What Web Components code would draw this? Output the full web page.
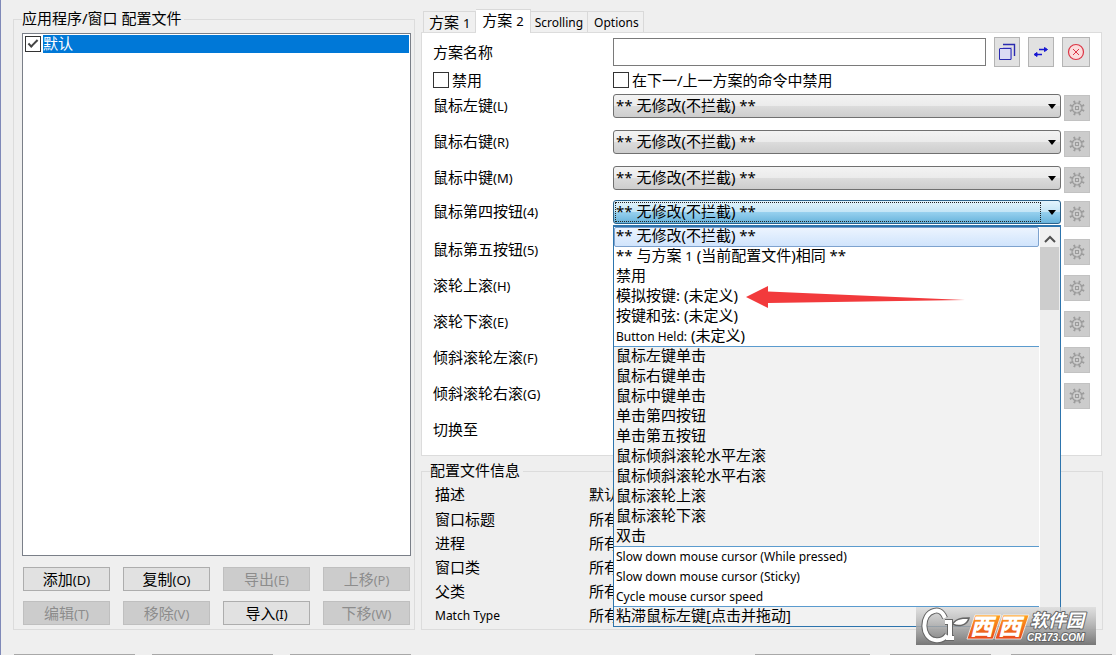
<!DOCTYPE html>
<html lang="zh-CN">
<head>
<meta charset="utf-8">
<title>配置文件</title>
<style>
  html { height: 100%; }
  body {
    margin: 0; height: 100%; box-sizing: border-box; overflow: hidden; position: relative;
    background: #efefef; border-left: 1px solid #7f89b8; color: #000;
    font: 15px/20px "Noto Sans", "Noto Sans CJK SC", sans-serif;
  }
</style>
</head>
<body>
<settings-page>
  <group-box slot="left" caption="应用程序/窗口 配置文件">
    <profile-list></profile-list>
  </group-box>
  <tab-panel slot="right">
    <name-row></name-row>
    <action-list></action-list>
  </tab-panel>
  <group-box slot="right" caption="配置文件信息">
    <profile-info></profile-info>
  </group-box>
</settings-page>
<site-mark></site-mark>

<script>
(function () {
  const BASE = `
    *, *::before, *::after { box-sizing: border-box; }
    button, input, select { font: inherit; color: inherit; margin: 0; padding: 0; }
    small { font-size: 13px; }
    .en { font-size: 12px; }
    input[type=checkbox] {
      appearance: none; flex: none; width: 16px; height: 16px; background: #fff; border: 1px solid #333;
    }
    input[type=checkbox]:checked::after {
      content: ""; display: block; width: 10px; height: 5px; margin: 3px 2px;
      border: solid #444; border-width: 0 0 2px 2px; transform: rotate(-45deg);
    }
  `;

  class BaseElement extends HTMLElement {
    constructor() {
      super();
      this.attachShadow({ mode: 'open' });
    }

    connectedCallback() {
      this.shadowRoot.innerHTML = `<style>${BASE}</style>${this.view()}`;
    }
  }

  class SettingsPage extends BaseElement {
    view() {
      return `
        <style>
          :host { display: block; padding: 9px 0 0 12px; }
          main {
            display: grid; grid-template-columns: minmax(0, 402fr) minmax(0, 682fr);
            gap: 6px; padding-right: 13px;
          }
          .col { display: flex; flex-direction: column; gap: 5px; }
          .left ::slotted(*) { flex: 1; }
          footer { display: flex; justify-content: space-between; margin-top: 24px; padding: 0 4px 0 1px; }
          footer div { display: flex; gap: 17px; }
          footer .end { gap: 20px; }
          footer button { width: 121px; height: 24px; background: #e1e1e1; border: 1px solid #a8a8a8; }
          footer .end button { width: 101px; }
          footer .end button:first-child { width: 115px; }
        </style>
        <main>
          <div class="col left"><slot name="left"></slot></div>
          <div class="col"><slot name="right"></slot></div>
        </main>
        <footer>
          <div><button></button><button></button><button></button></div>
          <div class="end"><button></button><button></button><button></button></div>
        </footer>
      `;
    }
  }

  class GroupBox extends BaseElement {
    view() {
      return `
        <style>
          :host { display: flex; }
          fieldset {
            display: flex; flex-direction: column;
            flex: 1; min-width: 0; margin: 0; padding: 0 3px 0 8px; border: 1px solid #dcdcdc;
          }
          legend { padding: 0 3px 0 0; height: 20px; line-height: 18px; }
          ::slotted(*) { flex: 1; }
        </style>
        <fieldset>
          <legend>${this.getAttribute('caption')}</legend>
          <slot></slot>
        </fieldset>
      `;
    }
  }

  class ProfileList extends BaseElement {
    view() {
      const buttons = [
        ['添加', 'D', 1], ['复制', 'O', 1], ['导出', 'E', 0], ['上移', 'P', 0],
        ['编辑', 'T', 0], ['移除', 'V', 0], ['导入', 'I', 1], ['下移', 'W', 0]
      ];
      return `
        <style>
          :host { display: flex; flex-direction: column; padding: 4px 0; }
          .list { flex: 1; background: #fff; border: 1px solid #7a7f88; padding: 1px; }
          label { display: flex; align-items: center; gap: 2px; padding-left: 1px; }
          label span { flex: 1; height: 18px; line-height: 16px; background: #0078d7; color: #fff; }
          .buttons {
            display: grid; grid-template-columns: repeat(4, 1fr); gap: 10px 13px; margin: 11px 1px 0;
          }
          button { height: 24px; line-height: 20px; background: #e1e1e1; border: 1px solid #adadad; }
          button:disabled { background: #ccc; border-color: #bfbfbf; color: #8c8c8c; }
        </style>
        <div class="list">
          <label><input type="checkbox" checked><span>默认</span></label>
        </div>
        <div class="buttons">
          ${buttons.map(([text, key, on]) => `
            <button ${on ? '' : 'disabled'}>${text}<small>(${key})</small></button>
          `).join('')}
        </div>
      `;
    }
  }

  class TabPanel extends BaseElement {
    view() {
      return `
        <style>
          :host { display: block; padding-right: 1px; }
          nav { display: flex; align-items: flex-end; height: 23px; padding-left: 2px; }
          button {
            height: 21px; line-height: 20px; padding: 0 5px; background: #f0f0f0;
            border: 1px solid #d9d9d9; border-width: 1px 1px 0 0;
          }
          button:first-child { border-left-width: 1px; }
          button[aria-selected=true] {
            height: 24px; margin-bottom: -1px; padding: 0 6px 2px; background: #fff; border-bottom: 0;
          }
          button.en { padding: 1px 4px 0; }
          button.en:last-child { padding: 1px 4px 0 6px; }
          .body { background: #fff; border: 1px solid #dcdcdc; padding: 4px 11px 18px; height: 424px; }
        </style>
        <nav role="tablist">
          <button role="tab">方案 <small>1</small></button>
          <button role="tab" aria-selected="true">方案 <small>2</small></button>
          <button role="tab" class="en">Scrolling</button>
          <button role="tab" class="en">Options</button>
        </nav>
        <div class="body"><slot></slot></div>
      `;
    }
  }

  class NameRow extends BaseElement {
    view() {
      return `
        <style>
          :host { display: block; }
          .row {
            display: grid; grid-template-columns: 180px 1fr; align-items: center;
            height: 27px; padding-bottom: 2px;
          }
          .name { height: 30px; padding: 0; }
          .tools { display: flex; align-items: center; gap: 8px; }
          .tools input { flex: 1; min-width: 0; height: 28px; padding: 0 4px; background: #fff; border: 1px solid #7a7a7a; }
          button { width: 26px; height: 30px; background: #e1e1e1; border: 1px solid #b4b4b4; display: grid; place-items: center; }
          button:last-child { width: 28px; }
          .check { display: flex; align-items: center; gap: 3px; }
          svg { display: block; }
        </style>
        <div class="row name">
          <label for="name">方案名称</label>
          <div class="tools">
            <input id="name" type="text">
            <button aria-label="复制">
              <svg width="18" height="18" fill="none" stroke="#2b2bb0">
                <path d="M5 1.5H16.5V13" stroke-width="1.4"/><path d="M13.5 4V16M5 4.5H13" stroke="#b9b4ee"/>
                <path d="M2 5.5H13V16.5H1.500V5.500" fill="#dcdcf4"/>
              </svg>
            </button>
            <button aria-label="交换">
              <svg width="18" height="18" fill="#1717d2" stroke="#1717d2" stroke-width="1.600">
                <path d="M7 6.500H13M5 11.500H10"/>
                <path d="M12.500 4.500L15.500 6.500L12.500 8.500ZM5 9.500L2 11.500L5 13.500Z" stroke-width="1"/>
              </svg>
            </button>
            <button aria-label="删除">
              <svg width="18" height="18" fill="none" stroke="#dc3545">
                <circle cx="9" cy="9" r="7.500" fill="#fbdcdc" stroke-width="1.200"/>
                <path d="M6 6L12 12M12 6L6 12"/>
              </svg>
            </button>
          </div>
        </div>
        <div class="row">
          <label class="check"><input type="checkbox">禁用</label>
          <label class="check"><input type="checkbox">在下一/上一方案的命令中禁用</label>
        </div>
      `;
    }
  }

  class ActionList extends BaseElement {
    view() {
      const rows = [
        ['鼠标左键', 'L'], ['鼠标右键', 'R'], ['鼠标中键', 'M'], ['鼠标第四按钮', '4'], ['鼠标第五按钮', '5'],
        ['滚轮上滚', 'H'], ['滚轮下滚', 'E'], ['倾斜滚轮左滚', 'F'], ['倾斜滚轮右滚', 'G']
      ];
      return `
        <style>
          :host { display: grid; grid-template-rows: 36px 36px 34px 38px repeat(6, 36px); }
          .switch { line-height: 22px; }
        </style>
        ${rows.map(([text, key]) => `
          <action-row hotkey="${key}" ${key === '4' ? 'open' : ''}>${text}</action-row>
        `).join('')}
        <div class="switch">切换至</div>
      `;
    }
  }

  class ActionRow extends BaseElement {
    view() {
      const open = this.hasAttribute('open');
      const teeth = [22, 67, 112, 157, 202, 247, 292, 337]
        .map(a => `<path d="M8 4V1M7 1H9" transform="rotate(${a} 8 8)"/>`).join('');
      return `
        <style>
          :host { display: grid; grid-template-columns: 180px 1fr 26px; align-items: start; }
          label { height: 24px; line-height: 22px; }
          .combo { position: relative; display: grid; margin-right: 3px; }
          select {
            appearance: none; width: 100%; height: 24px; padding: 0 20px 3px 2px; line-height: 18px;
            border: 1px solid #707070; border-radius: 3px;
            background: linear-gradient(#f3f3f3, #ebebeb 49%, #dcdcdc 50%, #cdcdcd);
          }
          .combo::after {
            content: ""; position: absolute; right: 5px; top: 10px; pointer-events: none;
            border: 4px solid transparent; border-top: 5px solid #000; border-bottom: 0;
          }
          :host([open]) select {
            border-color: #2c628b;
            background: linear-gradient(#e3f4fc, #c4e5f6 49%, #98d1ef 50%, #68b3db);
          }
          .focus { position: absolute; inset: 2px 20px 2px 2px; border: 1px dotted #222; pointer-events: none; }
          action-menu { position: absolute; top: 25px; left: 0; right: 0; z-index: 2; }
          button {
            display: grid; place-items: center; width: 26px; height: 26px; margin-top: 1px;
            background: #ccc; border: 1px solid #c2c2c2;
          }
          svg { display: block; overflow: visible; }
        </style>
        <label for="action"><slot></slot><small>(${this.getAttribute('hotkey')})</small></label>
        <div class="combo">
          <select id="action"><option>** 无修改(不拦截) **</option></select>
          ${open ? '<div class="focus"></div><action-menu></action-menu>' : ''}
        </div>
        <button disabled aria-label="设置">
          <svg width="16" height="16" fill="none" stroke="#9c9c9c" stroke-width="1.500">
            ${teeth}
            <circle cx="8" cy="8" r="5" stroke-width="1.200"/>
            <rect x="6.500" y="6.500" width="3" height="3" stroke-width="1"/>
          </svg>
        </button>
      `;
    }
  }

  class ActionMenu extends BaseElement {
    view() {
      const groups = [
        ['** 无修改(不拦截) **', '** 与方案 <small>1</small> (当前配置文件)相同 **', '禁用', '模拟按键: (未定义)',
          '按键和弦: (未定义)', '<span class="en">Button Held:</span> (未定义)'],
        ['鼠标左键单击', '鼠标右键单击', '鼠标中键单击', '单击第四按钮', '单击第五按钮', '鼠标倾斜滚轮水平左滚',
          '鼠标倾斜滚轮水平右滚', '鼠标滚轮上滚', '鼠标滚轮下滚', '双击'],
        ['Slow down mouse cursor (While pressed)', 'Slow down mouse cursor (Sticky)', 'Cycle mouse cursor speed']
          .map(t => `<span class="en">${t}</span>`),
        ['粘滞鼠标左键[点击并拖动]']
      ];
      return `
        <style>
          :host {
            display: grid; grid-template-columns: 1fr 20px; background: #fff;
            border: 1px solid #2d74ad; border-top-width: 2px;
          }
          ul { list-style: none; margin: 0; padding: 0; }
          .list { margin-right: 1px; }
          .group + .group { border-top: 1px solid #5b9bce; }
          .group:nth-child(even) { background: #f2f2f2; }
          li { height: 20px; line-height: 16px; padding-left: 2px; white-space: nowrap; }
          li:last-child { height: 19px; }
          li[aria-selected] {
            border: 1px solid #7da2ce; border-radius: 2px; padding-left: 1px; line-height: 14px;
            background: linear-gradient(#ecf4fe, #d0e4fc);
          }
          .bar { background: #eee; padding-right: 1px; }
          .up { display: block; width: 19px; height: 20px; border: 0; background: #f0f0f0; }
          .thumb { height: 63px; background: #cdcdcd; }
          .arrow { position: absolute; top: 57px; left: 132px; }
        </style>
        <div class="list" role="listbox">
          ${groups.map((items, g) => `
            <ul class="group" role="group">
              ${items.map((t, i) => `<li role="option" ${g + i === 0 ? 'aria-selected="true"' : ''}>${t}</li>`).join('')}
            </ul>
          `).join('')}
        </div>
        <div class="bar">
          <button class="up" aria-label="向上滚动">
            <svg width="12" height="8" fill="none" stroke="#505050" stroke-width="2"><path d="M1 7L6 2L11 7"/></svg>
          </button>
          <div class="thumb"></div>
        </div>
        <svg class="arrow" width="220" height="24" fill="#f23a3c">
          <path d="M0 13L22 2V7.500L219 16L22 19V24Z"/>
        </svg>
      `;
    }
  }

  class ProfileInfo extends BaseElement {
    view() {
      const rows = [
        ['描述', '默认'], ['窗口标题', '所有'], ['进程', '所有'], ['窗口类', '所有'], ['父类', '所有'],
        ['<span class="en">Match Type</span>', '所有']
      ];
      return `
        <style>
          :host { display: block; padding: 0 0 2px 5px; }
          dl { display: grid; grid-template-columns: 154px 1fr; grid-template-rows: 26px; grid-auto-rows: 24px; align-items: center; margin: 0; }
          dd { margin: 0; }
        </style>
        <dl>${rows.map(([k, v]) => `<dt>${k}</dt><dd>${v}</dd>`).join('')}</dl>
      `;
    }
  }

  class SiteMark extends BaseElement {
    view() {
      const letters = 'M29 11C26 3 21 3 18 4C5 7 5 31 19 33C25 34 29 31 31 28M29 15H34V31M30 31H38';
      return `
        <style>
          :host { position: absolute; right: 20px; bottom: 10px; z-index: 3; }
          svg { display: block; }
          text { fill: #fff; paint-order: stroke; stroke-linejoin: round; font-style: italic; font-weight: 700; }
          .block { font: italic 900 23px "Noto Sans CJK SC", sans-serif; }
          .name { font-size: 18px; font-family: "Noto Sans CJK SC", sans-serif; stroke: #666; stroke-width: 2px; }
          .site { font-size: 10px; font-family: "Liberation Sans", sans-serif; stroke: #666; stroke-width: 2px; }
        </style>
        <svg width="180" height="38">
          <defs>
            <linearGradient id="shade" x2="0" y2="1">
              <stop stop-color="#d8d8d8" stop-opacity=".7"/><stop offset="1" stop-color="#777"/>
            </linearGradient>
            <linearGradient id="orange" x2="0" y2="1">
              <stop stop-color="#ffa01e"/><stop offset="1" stop-color="#e8481c"/>
            </linearGradient>
          </defs>
          <rect width="180" height="38" fill="url(#shade)"/>
          <g fill="none">
            <path d="${letters}" stroke="#666" stroke-width="6"/>
            <path d="M36 19C38 12 45 11 53 11C51 19 42 20 37 17Z" fill="#fff" stroke="#666" stroke-width="1.500"/>
            <path d="${letters}" stroke="#fff" stroke-width="4"/>
          </g>
          <path d="M59 8H85L77 32H51ZM87 8H113L105 32H79Z" fill="url(#orange)" stroke="#fff" stroke-opacity=".7"/>
          <text class="block" x="54" y="28">西</text>
          <text class="block" x="82" y="28">西</text>
          <text class="name" x="114" y="20">软件园</text>
          <text class="site" x="111" y="34">CR173.COM</text>
        </svg>
      `;
    }
  }

  customElements.define('settings-page', SettingsPage);
  customElements.define('group-box', GroupBox);
  customElements.define('profile-list', ProfileList);
  customElements.define('tab-panel', TabPanel);
  customElements.define('name-row', NameRow);
  customElements.define('action-list', ActionList);
  customElements.define('action-row', ActionRow);
  customElements.define('action-menu', ActionMenu);
  customElements.define('profile-info', ProfileInfo);
  customElements.define('site-mark', SiteMark);
})();
</script>
</body>
</html>
